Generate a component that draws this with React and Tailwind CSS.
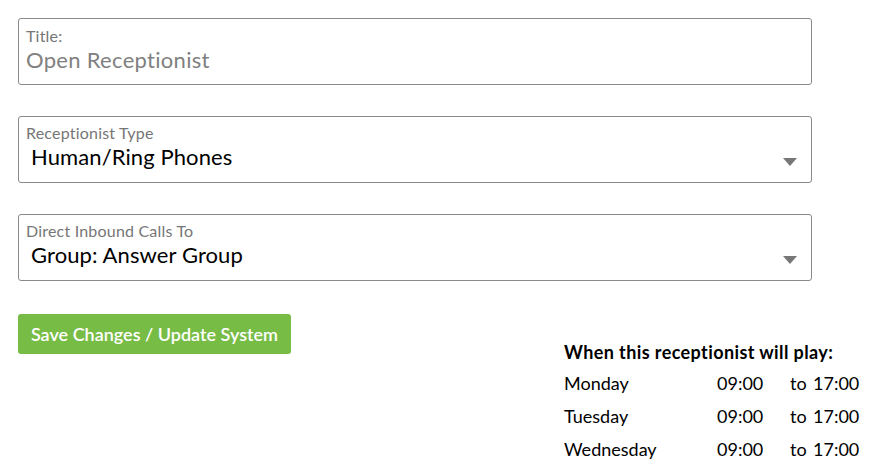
import { useState } from 'react'

const schedule = [
  { day: 'Monday', start: '09:00', end: '17:00' },
  { day: 'Tuesday', start: '09:00', end: '17:00' },
  { day: 'Wednesday', start: '09:00', end: '17:00' }
]

const SelectBox = ({ label, value }) => (
  <div className="relative h-[67px] w-[794px] rounded-[3px] border border-[#8a8a8a] bg-white">
    <div className="pl-[7px] pt-[5px] text-[16px] leading-[21px] tracking-[0.2px] text-[#767676]">{label}</div>
    <div className="pl-[12px] text-[22px] leading-[28px] tracking-[0.1px] text-black">{value}</div>
    <div className="absolute right-[14px] top-[41px] h-0 w-0 border-x-[7px] border-t-[8px] border-x-transparent border-t-[#777]" />
  </div>
)

const App = () => {
  const [title] = useState('Open Receptionist')

  return (
    <div className="min-h-[462px] bg-white pl-[18px] pt-[18px] font-['Lato',sans-serif]">
      {/* Title */}
      <div className="h-[67px] w-[794px] rounded-[3px] border border-[#8a8a8a] bg-white">
        <div className="pl-[7px] pt-[6px] text-[16px] leading-[21px] tracking-[0.2px] text-[#767676]">Title:</div>
        <div className="pl-[7px] text-[22px] leading-[28px] tracking-[0.3px] text-[#808080]">{title}</div>
      </div>

      <div className="mt-[31px]">
        <SelectBox label="Receptionist Type" value="Human/Ring Phones" />
      </div>
      <div className="mt-[31px]">
        <SelectBox label="Direct Inbound Calls To" value="Group: Answer Group" />
      </div>

      <div className="mt-[33px] flex items-start">
        <button className="h-[40px] w-[273px] rounded-[3px] bg-[#77bc45] text-[18px] font-semibold text-white">
          Save Changes / Update System
        </button>

        {/* Schedule */}
        <div className="ml-[273px] mt-[26px] text-black">
          <div className="text-[18px] font-bold leading-[24px] tracking-[0.4px]">When this receptionist will play:</div>
          <div className="mt-[3px]">
            {schedule.map((row) => (
              <div key={row.day} className="flex h-[33px] items-center text-[18px]">
                <span className="w-[153px]">{row.day}</span>
                <span className="w-[73px]">{row.start}</span>
                <span className="w-[23px]">to</span>
                <span>{row.end}</span>
              </div>
            ))}
          </div>
        </div>
      </div>
    </div>
  )
}

export default App
